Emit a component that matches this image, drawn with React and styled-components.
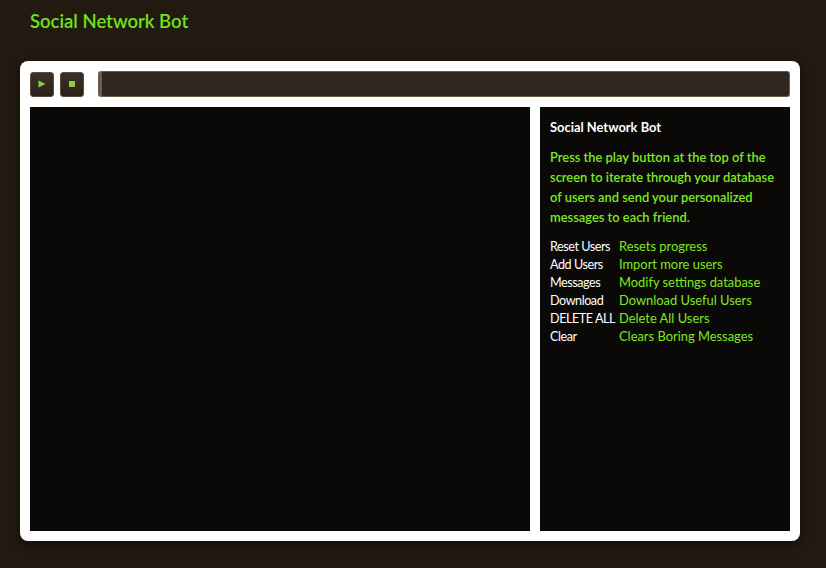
import React from 'react'
import styled, { createGlobalStyle } from 'styled-components'

const Global = createGlobalStyle`
  html, body { margin:0; padding:0; background:#221a10; }
  body { font-family: Lato, "Open Sans", sans-serif; }
`

const Page = styled.div`
  width:826px;
  height:568px;
  background:#221a10;
  box-sizing:border-box;
  padding:11px 26px 0 20px;
`

const Title = styled.h1`
  margin:0 0 30px 10px;
  height:20px;
  line-height:20px;
  font-size:18.5px;
  font-weight:600;
  color:#70e21c;
`

const Frame = styled.div`
  background:#fff;
  border-radius:8px;
  padding:10px;
  height:480px;
  box-sizing:border-box;
  display:flex;
  flex-direction:column;
  gap:10px;
  box-shadow:0 3px 8px rgba(0,0,0,0.5);
`

const Toolbar = styled.div`
  display:flex;
  align-items:center;
  height:26px;
`

const CtlButton = styled.button`
  width:24px;
  height:25px;
  margin-right:6px;
  padding:0;
  border:1px solid #5a4a3b;
  border-radius:3px;
  background:linear-gradient(#3b3128, #2a221b);
  display:flex;
  align-items:center;
  justify-content:center;
  cursor:pointer;
`

const Progress = styled.div`
  flex:1;
  margin-left:8px;
  height:26px;
  box-sizing:border-box;
  border-radius:3px;
  background:#2f2620;
  border:1px solid #6b5c4a;
  border-left:4px solid #6e5a4c;
`

const Body = styled.div`
  flex:1;
  display:flex;
  gap:10px;
`

const Screen = styled.div`
  width:500px;
  background:#0a0908;
`

const Side = styled.div`
  flex:1;
  background:#0a0908;
  padding:10px 10px;
  font-size:12.9px;
`

const SideTitle = styled.div`
  color:#fff;
  font-weight:700;
  line-height:20px;
  margin-bottom:10px;
`

const Para = styled.p`
  margin:0 0 10px;
  color:#7ee81e;
  font-weight:600;
  line-height:20px;
`

const Cmds = styled.div`
  display:grid;
  grid-template-columns:69px 1fr;
  grid-auto-rows:18px;
  align-items:baseline;
  line-height:18px;
`

const Cmd = styled.span`
  color:#fff;
  font-size:12.6px;
  letter-spacing:-0.45px;
  white-space:nowrap;
`

const Desc = styled.span`
  color:#7ee81e;
  white-space:nowrap;
`

const commands = [
  ['Reset Users', 'Resets progress'],
  ['Add Users', 'Import more users'],
  ['Messages', 'Modify settings database'],
  ['Download', 'Download Useful Users'],
  ['DELETE ALL', 'Delete All Users'],
  ['Clear', 'Clears Boring Messages'],
]

export default function App() {
  return (
    <Page>
      <Global />
      <Title>Social Network Bot</Title>
      <Frame>
        <Toolbar>
          <CtlButton aria-label="play">
            <svg width="8" height="8" viewBox="0 0 8 8"><path d="M0.5 0.5 L7.5 4 L0.5 7.5 Z" fill="#8ccd3a" /></svg>
          </CtlButton>
          <CtlButton aria-label="stop">
            <svg width="6" height="6" viewBox="0 0 6 6"><rect width="6" height="6" fill="#8ccd3a" /></svg>
          </CtlButton>
          <Progress />
        </Toolbar>
        <Body>
          <Screen />
          <Side>
            <SideTitle>Social Network Bot</SideTitle>
            <Para>Press the play button at the top of the screen to iterate through your database of users and send your personalized messages to each friend.</Para>
            <Cmds>
              {commands.map(([c, d]) => (
                <React.Fragment key={c}>
                  <Cmd>{c}</Cmd>
                  <Desc>{d}</Desc>
                </React.Fragment>
              ))}
            </Cmds>
          </Side>
        </Body>
      </Frame>
    </Page>
  )
}
